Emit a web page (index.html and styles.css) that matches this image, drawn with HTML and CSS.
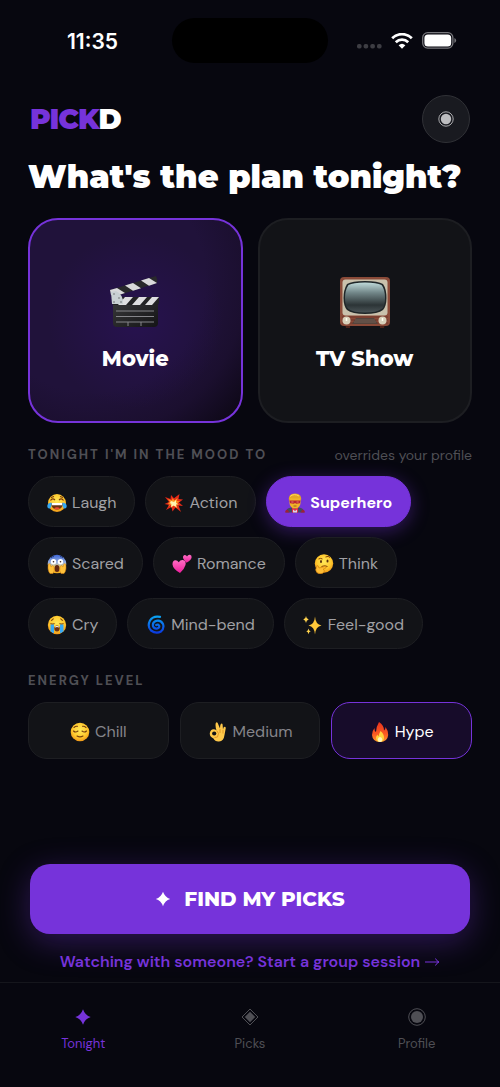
FILE: index.html
```html
<!DOCTYPE html>
<html lang="en">
<head>
<meta charset="utf-8">
<meta name="viewport" content="width=device-width, initial-scale=1">
<title>Pickd</title>
<link rel="stylesheet" href="styles.css">
</head>
<body>
<svg class="defs" aria-hidden="true">
  <defs>
    <radialGradient id="face" cx=".5" cy=".4" r=".6"><stop offset="0" stop-color="#ffe95a"/><stop offset=".65" stop-color="#ffc92e"/><stop offset="1" stop-color="#ef9718"/></radialGradient>
    <linearGradient id="fear" x2="0" y2="1"><stop offset="0" stop-color="#3d66d8"/><stop offset=".45" stop-color="#9db4dc"/><stop offset=".7" stop-color="#f5c63c"/><stop offset="1" stop-color="#f0a91c"/></linearGradient>
    <linearGradient id="pink" x2="0" y2="1"><stop offset="0" stop-color="#ff6fc4"/><stop offset="1" stop-color="#ee1d9c"/></linearGradient>
    <linearGradient id="swirl" x2="0" y2="1"><stop offset="0" stop-color="#0aa0f0"/><stop offset="1" stop-color="#0b3be0"/></linearGradient>
    <linearGradient id="flame" x2="0" y2="1"><stop offset="0" stop-color="#e8321c"/><stop offset=".6" stop-color="#fb5a22"/><stop offset="1" stop-color="#ff9a2a"/></linearGradient>
    <linearGradient id="glass" x2="0" y2="1"><stop offset="0" stop-color="#bfdada"/><stop offset=".35" stop-color="#708486"/><stop offset=".75" stop-color="#2c3436"/><stop offset="1" stop-color="#495356"/></linearGradient>
    <linearGradient id="slate" x2="1" y2="1"><stop offset="0" stop-color="#3a3a3c"/><stop offset="1" stop-color="#141416"/></linearGradient>
  </defs>
</svg>

<header class="status">
  <time class="clock">11:35</time>
  <span class="island"></span>
  <span class="signals">
    <svg class="dots" width="26" height="16" viewBox="0 0 26 16" fill="#3d3d43"><rect x="1" y="11" width="4.600" height="4.600" rx="1.800"/><rect x="7.600" y="11" width="4.600" height="4.600" rx="1.800"/><rect x="14.300" y="11" width="4.600" height="4.600" rx="1.800"/><rect x="21" y="11" width="4.600" height="4.600" rx="1.800"/></svg>
    <svg width="22" height="16" viewBox="0 0 22 16" fill="none" stroke="#fff" stroke-width="2.8"><path d="M1.200 5.200a14 14 0 0 1 19.600 0"/><path d="M4.800 9.200a9 9 0 0 1 12.400 0"/><path d="M11 15.800 7.600 12.300a5 5 0 0 1 6.800 0z" fill="#fff" stroke="none"/></svg>
    <svg width="35" height="17" viewBox="0 0 35 17"><rect x=".7" y=".7" width="30.2" height="15.4" rx="5" fill="none" stroke="#77777c" stroke-width="1.3"/><rect x="2.4" y="2.4" width="26.8" height="12" rx="3.5" fill="#fff"/><path d="M32.4 6v5q1.7-.7 1.7-2.5T32.4 6z" fill="#77777c"/></svg>
  </span>
</header>

<main class="screen">
  <div class="topbar">
    <a class="logo" href="#">PICK<span class="logo-end">D</span></a>
    <button class="avatar" type="button" aria-label="Profile">
      <svg width="16" height="16" viewBox="0 0 16 16"><circle cx="8" cy="8" r="7.2" fill="none" stroke="#a9a9ac"/><circle cx="8" cy="8" r="5.2" fill="#bdbdc0"/></svg>
    </button>
  </div>

  <h1 class="title">What's the plan tonight?</h1>

  <div class="kinds">
    <button class="kind kind-on" type="button" aria-pressed="true">
      <svg width="52" height="54" viewBox="0 0 52 54">
        <rect x="4" y="22" width="45" height="30" rx="4" fill="url(#slate)"/>
        <path d="M3 22h47v5q0 3-3 3H5q-2 0-2-3z" fill="#222224"/>
        <path d="m16 22h8l-7 8H9zM30 22h8l-7 8h-8zM43 22h7l-7 8h-7z" fill="#dedee0"/>
        <path d="m1 15 46-14q2 4 1 7L7 21z" fill="#29292b"/>
        <path d="m1 15 7-2 8 5-9 3-5-1zM16 10.500l8-2.500 8 5.200-8 2.500zM32 5.600l8-2.500 8 5-8 2.600z" fill="#d9d9db"/>
        <path d="m2 17 5-1q8 4 7 13H3z" fill="#c9d0d3"/>
        <g fill="#66696c"><circle cx="5" cy="19" r=".8"/><circle cx="10" cy="23" r=".8"/><circle cx="5" cy="27" r=".8"/><circle cx="12" cy="27" r=".8"/></g>
        <path d="M7 36h38M7 41.500h38M7 47h38M19 47v4M32 47v4" stroke="#85858a" stroke-width="1" fill="none"/>
      </svg>
      <span>Movie</span>
    </button>
    <button class="kind" type="button" aria-pressed="false">
      <svg width="52" height="54" viewBox="0 0 52 54">
        <path d="M6 49h5v4H7zM41 49h5l-1 4h-4z" fill="#4b231b"/>
        <rect x="1" y="2" width="50" height="49" rx="4" fill="#8a4a38"/>
        <rect x="3.500" y="4.500" width="45" height="36" rx="3" fill="#c9c1ac"/>
        <path d="M26 6q13 0 18 3 3.500 5 3.500 14 0 8-3.500 12-5 4-18 4T8 35q-3.500-4-3.500-12T8 9q5-3 18-3z" fill="#1f2628"/>
        <path d="M26 7.500q12 0 16.500 2.500 3.500 4 3.500 13t-3.500 11Q38 37.500 26 37.500T9.500 34Q6 31 6 23t3.500-13Q14 7.500 26 7.500z" fill="url(#glass)"/>
        <path d="M3 42h46M3 45h46M3 48h46" stroke="#6e3428" stroke-width="1"/>
        <path d="M17 43h18l4 6H13z" fill="#54443c"/><path d="M15 47h22M16 45h20" stroke="#80695c" stroke-width=".7"/>
        <circle cx="7.500" cy="45.500" r="4" fill="#d8d0ba"/><circle cx="43.500" cy="45.500" r="4" fill="#d8d0ba"/><path d="M7.500 43v3M43.500 43v3" stroke="#fffdf0" stroke-width="1.500"/>
      </svg>
      <span>TV Show</span>
    </button>
  </div>

  <section class="group">
    <div class="group-head"><h2 class="label">TONIGHT I'M IN THE MOOD TO</h2><span class="hint">overrides your profile</span></div>
    <div class="chips">
      <button class="chip" type="button"><svg class="emoji" viewBox="0 0 20 20"><circle cx="10" cy="10" r="9" fill="url(#face)"/><path d="M3.500 7.500q2-3 4.500-.5M12 7q2.500-2.500 4.500.5M4 4.500l3-1M13 3.500l3 1" fill="none" stroke="#7a3b0c" stroke-width="1.100"/><path d="M4 10h12q-.5 6.500-6 6.500T4 10z" fill="#6d3210"/><path d="M4.500 10h11l-.5 2.300H5z" fill="#fff"/><path d="M7 15.500q3-2.500 6 0-3 2-6 0z" fill="#e94b35"/><path d="M4.500 9.500Q0 10 .3 13.500q.2 2.500 2.500 2 2-1 1.700-6zM15.500 9.500q4.500.5 4.200 4-.2 2.500-2.500 2-2-1-1.700-6z" fill="#35a8f2"/></svg>Laugh</button>
      <button class="chip" type="button"><svg class="emoji" viewBox="0 0 20 20"><path d="m1 4 5.500 2L7 2l3 3.200L15.500 1l-1 5 4.500.500-4 3 4 3.500-4.500-.5L17 19l-5.500-4.500-3 4-1-4.500L2 17l3-5-4.500-1L5 9z" fill="#e42a18"/><path d="m4 6 4 1.500L8.500 5l2 2.500 3-2.500-.5 3 3 .500-3 1.500 2 2-3-.5 1.500 4-4-3-2 2.500-.5-3.500L4 13.500 6 11l-2.500-.5L6 9z" fill="#ff9a20"/><path d="m7 8 3 1 2-2v3l2 1-2 .500.500 2.500-3-1.500L7 14l.500-3L6 10z" fill="#fff4b0"/></svg>Action</button>
      <button class="chip chip-on" type="button"><svg class="emoji" viewBox="0 0 20 20"><path d="M1 19.500q0-5 6-5h6q6 0 6 5z" fill="#454a60"/><path d="M0 19.500q0-2.500 2.500-3l2 3zM20 19.500q0-2.500-2.500-3l-2 3z" fill="#9d2236"/><path d="m7 14 3 2 3-2v5.500H7z" fill="#e82b48"/><path d="m8 16.500 2 1.500 2-1.500v3H8z" fill="#d8d4e8"/><rect x="4.500" y="2" width="11" height="13.500" rx="5.500" fill="#f0b42a"/><path d="M4 8.500Q2.500.500 10 .500T16 8.500L14.500 5q-4 1-9 0z" fill="#e5a726"/><path d="M5 3.500Q9 0 14 3" stroke="#ffd75b" fill="none"/><path d="M4.600 7.500h10.800l-.5 2.700-3.700.5-1.200-.8-1.200.8-3.700-.5z" fill="#b92630"/><path d="M6.300 9h2.200M11.500 9h2.200" stroke="#ff9c8d" stroke-width=".7"/><path d="M8.500 13h3" stroke="#914b16" stroke-width=".8"/></svg>Superhero</button>
      <button class="chip" type="button"><svg class="emoji" viewBox="0 0 20 20"><circle cx="10" cy="10" r="9.300" fill="url(#fear)"/><circle cx="6.500" cy="7.800" r="2.700" fill="#fff"/><circle cx="13.500" cy="7.800" r="2.700" fill="#fff"/><circle cx="6.500" cy="7.800" r=".8" fill="#3b2419"/><circle cx="13.500" cy="7.800" r=".8" fill="#3b2419"/><path d="M4 4q1-1.500 3-1.500M13 2.500q2 0 3 1.500" fill="none" stroke="#263d85"/><ellipse cx="10" cy="14.500" rx="2.500" ry="3.600" fill="#612611"/><path d="M1.500 10q1-1 1.700.500L4 13q2-3 3 0 .8 4-1 6.500H3Q0 16 1.500 10zM18.500 10q-1-1-1.700.500L16 13q-2-3-3 0-.8 4 1 6.500h3q3-3.500 1.500-9.500z" fill="#ffc13a" stroke="#d98513" stroke-width=".5"/></svg>Scared</button>
      <button class="chip" type="button"><svg class="emoji" viewBox="0 0 20 20"><path d="M8 19Q1 15 .500 10.500.300 6.500 3.500 6.300q2 0 3.200 2Q8.500 5.500 11 6q3.500 1 2.500 5Q12.500 15 8 19z" fill="url(#pink)"/><path d="M14.500 8.800Q10.500 5 11 2.800q.6-2.300 2.600-1.600 1 .300 1.400 1.300Q16 .500 18 .800q2 .500 1.600 2.700Q19 6.500 14.500 8.800z" fill="url(#pink)"/></svg>Romance</button>
      <button class="chip" type="button"><svg class="emoji" viewBox="0 0 20 20"><circle cx="10" cy="9.500" r="9.200" fill="url(#face)"/><ellipse cx="7" cy="7.500" rx="1" ry="1.500" fill="#59300d"/><ellipse cx="13.500" cy="7" rx="1" ry="1.500" fill="#59300d"/><path d="M4.500 5q2-1.200 4 0M11.500 3q3-1.500 4.500.500M7.500 12.500q3.500-1.500 6 0" fill="none" stroke="#824309" stroke-width="1"/><path d="M3 11.500q1.500 0 2 2.500l6-1.500q2 .3.800 1.600L9 15.300q2 .5 1 2.500-1 2.200-4 2-4-.3-4.300-4z" fill="#ffbd35" stroke="#d4820d" stroke-width=".7"/></svg>Think</button>
      <button class="chip" type="button"><svg class="emoji" viewBox="0 0 20 20"><circle cx="10" cy="10" r="9.200" fill="url(#face)"/><path d="M3.500 8.500q2 1.300 4 0M12.500 8.500q2 1.300 4 0M4 5.500q1.500-.3 2.500-2M13.500 3.500q1 1.700 2.500 2" fill="none" stroke="#79400d" stroke-width="1.100"/><path d="M3.500 9.500H7v8.800q-2-.3-3.500-2zM13 9.500h3.500v6.800q-1.500 1.700-3.500 2z" fill="#36a9f5"/><ellipse cx="10" cy="13.500" rx="2.700" ry="3" fill="#6d3212"/><path d="M8 12q2-1 4 0" stroke="#fff" fill="none"/></svg>Cry</button>
      <button class="chip" type="button"><svg class="emoji" viewBox="0 0 20 20" fill="none" stroke="url(#swirl)" stroke-linecap="round"><path d="M14 1.800Q7 .500 4 5.500q-3 6 1 10 5 3.800 10 1 3.500-3 2-7.500-2-4-6.500-3.200-4.300 1.200-3.500 5.400 1.300 3 4.500 2.200Q14 12.500 13 10.500q-1-1.500-2.800-.5" stroke-width="2.200"/></svg>Mind-bend</button>
      <button class="chip" type="button"><svg class="emoji" viewBox="0 0 20 20"><path d="M12 1.500q.5 8 6.500 9-6 1-6.500 9-.5-8-6.500-9 6-1 6.500-9z" fill="#ffc83a"/><path d="M3 1q.3 3 2.700 3.500Q3.300 5 3 8 2.700 5 .300 4.500 2.700 4 3 1zM5.500 13.500q.3 2.500 2.200 2.800-1.900.4-2.200 3-.3-2.600-2.200-3 1.900-.3 2.200-2.800z" fill="#ffd34d"/></svg>Feel-good</button>
    </div>
  </section>

  <section class="group">
    <h2 class="label">ENERGY LEVEL</h2>
    <div class="levels">
      <button class="level" type="button"><svg class="emoji" viewBox="0 0 20 20"><circle cx="10" cy="10" r="9.300" fill="url(#face)"/><path d="M3.500 9q2 2 4.500 0M12 9q2.500 2 4.500 0M4 5.500q1.500-1.500 3.500-1.200M12.500 4.300q2-.3 3.500 1.200M7 14q3 1.700 6 0" fill="none" stroke="#79400d" stroke-width="1.100" stroke-linecap="round"/></svg>Chill</button>
      <button class="level" type="button"><svg class="emoji" viewBox="0 0 20 20"><path d="M8.500 8.500Q7 4 7.800 1q1-1.500 2 .2L12 6.500Q12 3 12.800 2q1.300-1 1.800.6l.4 5q.3-2.500 1.500-2.800 1.500 0 1.200 1.700L16.500 13q-.7 6-5.500 6.500-4 .3-5.500-3Q1.500 15 1.800 11 2.500 7.500 5.500 7.300q2 0 3 1.200z" fill="#ffc94a"/><circle cx="6.200" cy="11.500" r="2.100" fill="#121317"/><path d="m9 9 1.500 2.500-1 3.500-3 .5M12 7v4M15 8v3.500" fill="none" stroke="#d98c20" stroke-width=".8"/></svg>Medium</button>
      <button class="level level-on" type="button"><svg class="emoji" viewBox="0 0 20 20"><path d="M9 0q5 3 5 8.500Q15.700 7 15.500 5q3 4 2.700 8-.7 7-8.200 7-7.500-.2-8-7Q2 9 4.500 6q-.2 3 1.500 4Q6 5 9 0z" fill="url(#flame)"/><path d="M10.500 9q3.700 3 3.500 7-.5 4-4 4t-4-4q0-2 1.500-3.500.2 1.500 1.200 1.800Q9 11.500 10.500 9z" fill="#ffd33c"/><ellipse cx="10" cy="17.500" rx="2.200" ry="2.500" fill="#fff6bd"/></svg>Hype</button>
    </div>
  </section>

  <div class="actions">
    <button class="cta" type="button"><svg width="16" height="16" viewBox="0 0 16 16"><path d="M8 .800q2 5.700 7.200 7.200-5.200 1.500-7.200 7.200Q6 9.500.800 8 6 6.500 8 .800z" fill="#fff"/></svg>FIND MY PICKS</button>
    <a class="group-link" href="#">Watching with someone? Start a group session<svg width="15" height="10" viewBox="0 0 15 10" fill="none" stroke="currentColor"><path d="M0 5h14M10.500 1.500Q11.500 4 14 5q-2.500 1-3.500 3.500"/></svg></a>
  </div>
</main>

<nav class="tabs">
  <a class="tab tab-on" href="#"><svg width="18" height="18" viewBox="0 0 18 18"><path d="M9 1.200q2 6 7.700 7.800Q11 10.800 9 16.800 7 10.800 1.300 9 7 7.200 9 1.200z" fill="currentColor"/></svg>Tonight</a>
  <a class="tab" href="#"><svg width="18" height="18" viewBox="0 0 18 18"><path d="m9 1 8 8-8 8-8-8z" fill="none" stroke="currentColor"/><path d="m9 3.800 5.200 5.200L9 14.200 3.800 9z" fill="currentColor"/></svg>Picks</a>
  <a class="tab" href="#"><svg width="18" height="18" viewBox="0 0 18 18"><circle cx="9" cy="9" r="8.300" fill="none" stroke="currentColor"/><circle cx="9" cy="9" r="6" fill="currentColor"/></svg>Profile</a>
</nav>
</body>
</html>
```
FILE: styles.css
```css
:root {
  --bg: #07070f;
  --panel: #121317;
  --line: #1d1e22;
  --purple: #7633da;
  --muted: #4f4f55;
  --soft: #a0a0a4;
  --display: Montserrat, Inter, sans-serif;
  --body: "DM Sans", Inter, "Liberation Sans", sans-serif;
}

* { box-sizing: border-box; }

body {
  margin: 0;
  min-height: 100vh;
  display: flex;
  flex-direction: column;
  background: var(--bg);
  color: #fff;
  font-family: var(--body);
}

button {
  font: inherit;
  color: inherit;
  cursor: pointer;
}

a { text-decoration: none; }
svg { flex: none; }

.defs {
  position: absolute;
  width: 0;
  height: 0;
}

.status {
  display: grid;
  grid-template-columns: 1fr 156px 1fr;
  align-items: center;
  padding-top: 18px;
}

.clock {
  justify-self: center;
  padding: 2px 0 0 13px;
  font-family: Inter, sans-serif;
  font-size: 21px;
  line-height: 24px;
  font-weight: 600;
}

.island {
  height: 45px;
  border-radius: 23px;
  background: #000;
}

.signals {
  display: flex;
  justify-content: center;
  align-items: center;
  gap: 9px;
  padding-right: 15px;
}

.screen {
  flex: 1;
  display: flex;
  flex-direction: column;
  padding: 32px 28px 0;
}

.topbar {
  display: flex;
  align-items: center;
  justify-content: space-between;
  padding: 0 2px;
}

.logo {
  font-family: var(--display);
  font-size: 28px;
  line-height: 32px;
  font-weight: 900;
  letter-spacing: -1px;
  color: var(--purple);
}

.logo-end { color: #fff; }

.avatar {
  display: grid;
  place-items: center;
  width: 48px;
  height: 48px;
  padding: 0;
  border: 1px solid #303136;
  border-radius: 50%;
  background: #191a20;
}

.title {
  margin: 14px 0 21px;
  font-family: var(--display);
  font-size: 32px;
  line-height: 40px;
  font-weight: 900;
  white-space: nowrap;
}

.kinds {
  display: grid;
  grid-template-columns: 1fr 1fr;
  gap: 15px;
}

.kind {
  display: flex;
  flex-direction: column;
  align-items: center;
  justify-content: center;
  gap: 16px;
  min-height: 205px;
  padding: 6px 0 0;
  border: 2px solid var(--line);
  border-radius: 30px;
  background: var(--panel);
  font-family: var(--display);
  font-size: 21px;
  line-height: 28px;
  font-weight: 800;
}

.kind-on {
  border-color: var(--purple);
  background:
    radial-gradient(circle at 50% 50%, rgba(42, 18, 88, .7), transparent 60%),
    radial-gradient(circle at 30% 30%, #20123a 55%, #1b0f2f 75%, #0b0712 100%);
}

.group { padding-top: 21px; }

.group-head {
  display: flex;
  align-items: center;
  justify-content: space-between;
}

.label {
  margin: 0;
  font-size: 13px;
  line-height: 22px;
  font-weight: 700;
  letter-spacing: 2px;
  color: var(--muted);
}

.hint {
  font-size: 14px;
  line-height: 22px;
  color: var(--muted);
}

.chips {
  display: flex;
  flex-wrap: wrap;
  gap: 10px;
  padding-top: 10px;
}

.chip,
.level {
  display: flex;
  align-items: center;
  gap: 5px;
  border: 1px solid var(--line);
  background: var(--panel);
  color: var(--soft);
  font-size: 16px;
  line-height: 20px;
}

.chip {
  height: 51px;
  padding: 2px 18px 0;
  border-radius: 26px;
}

.chip-on {
  border-color: var(--purple);
  background: var(--purple);
  box-shadow: 0 4px 18px rgba(118, 51, 218, .4);
  color: #fff;
  font-weight: 700;
}

.emoji {
  width: 20px;
  height: 20px;
}

.levels {
  display: grid;
  grid-template-columns: repeat(3, 1fr);
  gap: 11px;
  padding-top: 10px;
}

.level {
  justify-content: center;
  height: 57px;
  padding: 2px 0 0;
  border-radius: 19px;
  color: #85858a;
}

.level-on {
  border-color: var(--purple);
  background: #170c2a;
  color: #fff;
}

.actions {
  display: flex;
  flex-direction: column;
  gap: 16px;
  margin-top: auto;
  padding: 32px 2px 8px;
}

.cta {
  display: flex;
  align-items: center;
  justify-content: center;
  gap: 13px;
  height: 70px;
  border: 0;
  border-radius: 20px;
  background: var(--purple);
  box-shadow: 0 8px 32px rgba(118, 51, 218, .35);
  font-family: var(--display);
  font-size: 20px;
  font-weight: 800;
}

.group-link {
  display: flex;
  align-items: center;
  justify-content: center;
  gap: 5px;
  font-size: 16px;
  line-height: 24px;
  font-weight: 600;
  color: var(--purple);
}

.tabs {
  display: grid;
  grid-template-columns: repeat(3, 1fr);
  padding: 25px 0 34px;
  border-top: 1px solid #15161c;
}

.tab {
  display: flex;
  flex-direction: column;
  align-items: center;
  gap: 9px;
  font-size: 13px;
  line-height: 18px;
  color: var(--muted);
}

.tab-on { color: var(--purple); }
```
